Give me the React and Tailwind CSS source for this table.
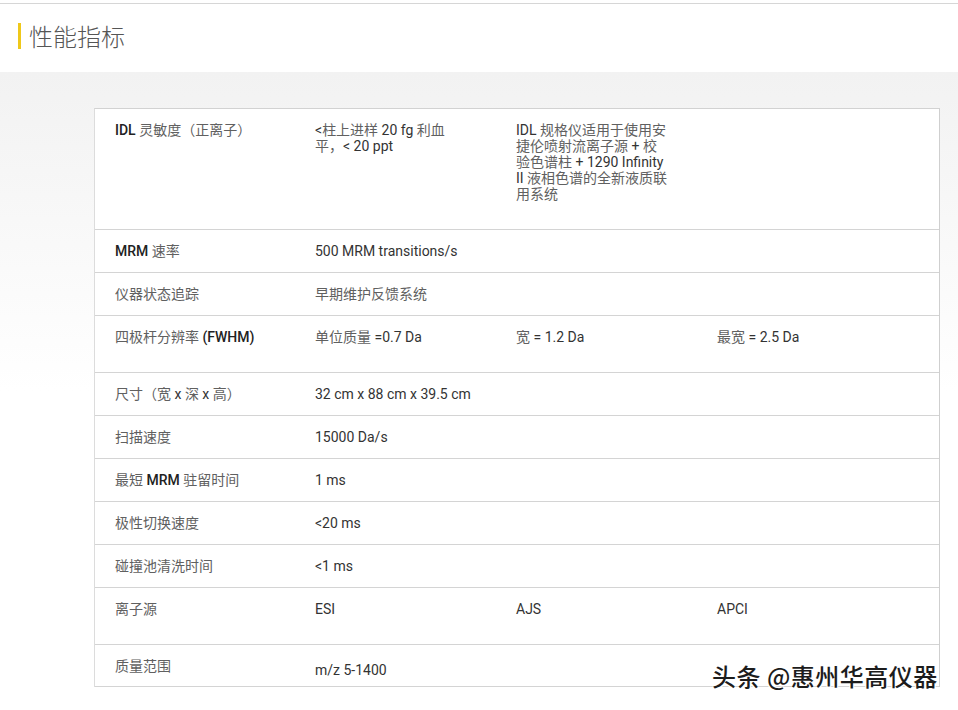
import React from 'react';

const CJK = /([\u3000-\u303f\u4e00-\u9fff\uff00-\uffef]+)/;
const CAPS = /[A-Z]/;

// split text into CJK / latin runs so each can get its own weight & tone
const Runs = ({ text, strong }) =>
  text
    .split(CJK)
    .filter(Boolean)
    .map((part, i) =>
      CJK.test(part) ? (
        <span key={i} className="text-[#606060]">{part}</span>
      ) : (
        <span key={i} className={strong && CAPS.test(part) ? 'text-[#222] font-medium' : 'text-[#333]'}>{part}</span>
      )
    );

const rows = [
  {
    h: 'h-[121px]',
    cells: [
      'IDL 灵敏度（正离子）',
      ['<柱上进样 20 fg 利血', '平，< 20 ppt'],
      ['IDL 规格仪适用于使用安', '捷伦喷射流离子源 + 校', '验色谱柱 + 1290 Infinity', 'II 液相色谱的全新液质联', '用系统'],
    ],
  },
  { h: 'h-[43px]', cells: ['MRM 速率', '500 MRM transitions/s'] },
  { h: 'h-[43px]', cells: ['仪器状态追踪', '早期维护反馈系统'] },
  { h: 'h-[57px]', cells: ['四极杆分辨率 (FWHM)', '单位质量 =0.7 Da', '宽 = 1.2 Da', '最宽 = 2.5 Da'] },
  { h: 'h-[43px]', cells: ['尺寸（宽 x 深 x 高）', '32 cm x 88 cm x 39.5 cm'] },
  { h: 'h-[43px]', cells: ['扫描速度', '15000 Da/s'] },
  { h: 'h-[43px]', cells: ['最短 MRM 驻留时间', '1 ms'] },
  { h: 'h-[43px]', cells: ['极性切换速度', '<20 ms'] },
  { h: 'h-[43px]', cells: ['碰撞池清洗时间', '<1 ms'] },
  { h: 'h-[57px]', cells: ['离子源', 'ESI', 'AJS', 'APCI'] },
  { h: 'h-[42px]', cells: ['质量范围', 'm/z 5-1400'], shiftSecond: true },
];

const colWidths = ['w-[200px]', 'w-[201px]', 'w-[201px]', 'flex-1'];

const Cell = ({ value, index, shift }) => {
  const lines = Array.isArray(value) ? value : [value];
  return (
    <div className={`${colWidths[index]} pl-[20px] ${shift ? 'pt-[17px]' : 'pt-[13px]'}`}>
      {lines.map((line, i) => (
        <div key={i} className="whitespace-nowrap">
          <Runs text={line} strong={index === 0} />
        </div>
      ))}
    </div>
  );
};

export default function App() {
  return (
    <div
      className="relative w-[958px] h-[710px] bg-white pt-[3px] overflow-hidden"
      style={{ fontFamily: 'Roboto, "Noto Sans CJK SC", sans-serif' }}
    >
      {/* title bar */}
      <div className="h-[69px] border-t border-[#d6d6d6] flex items-start pt-[18px] pl-[18px]">
        <div className="flex items-center gap-[8px]">
          <span className="w-[3px] h-[26px] bg-[#efc81a]" />
          <h2 className="text-[24px] leading-[28px] text-[#555] font-light" style={{ fontFamily: '"Noto Sans CJK SC", sans-serif' }}>
            性能指标
          </h2>
        </div>
      </div>

      {/* spec table */}
      <div className="h-[638px] bg-gradient-to-b from-[#f2f2f2] via-white to-white pt-[36px] pl-[94px]">
        <div className="w-[846px] bg-white border-t border-l border-r border-t-[#d2d2d2] border-l-[#dcdcdc] border-r-[#cfcfcf] text-[14px] leading-[16px]">
          {rows.map((row, r) => (
            <div key={r} className={`${row.h} flex border-b border-[#d4d4d4]`}>
              {row.cells.map((c, i) => (
                <Cell key={i} value={c} index={i} shift={row.shiftSecond && i === 1} />
              ))}
            </div>
          ))}
        </div>
      </div>

      {/* watermark */}
      <div
        className="absolute left-[712px] top-[661px] text-[24px] leading-[30px] tracking-[0.5px] font-medium text-[#1c1c1c] whitespace-nowrap"
        style={{
          fontFamily: '"Noto Sans CJK SC", sans-serif',
          textShadow: '1px 1px 0 #fff, -1px -1px 0 #fff, 1px -1px 0 #fff, -1px 1px 0 #fff',
        }}
      >
        头条 @惠州华高仪器
      </div>
    </div>
  );
}
